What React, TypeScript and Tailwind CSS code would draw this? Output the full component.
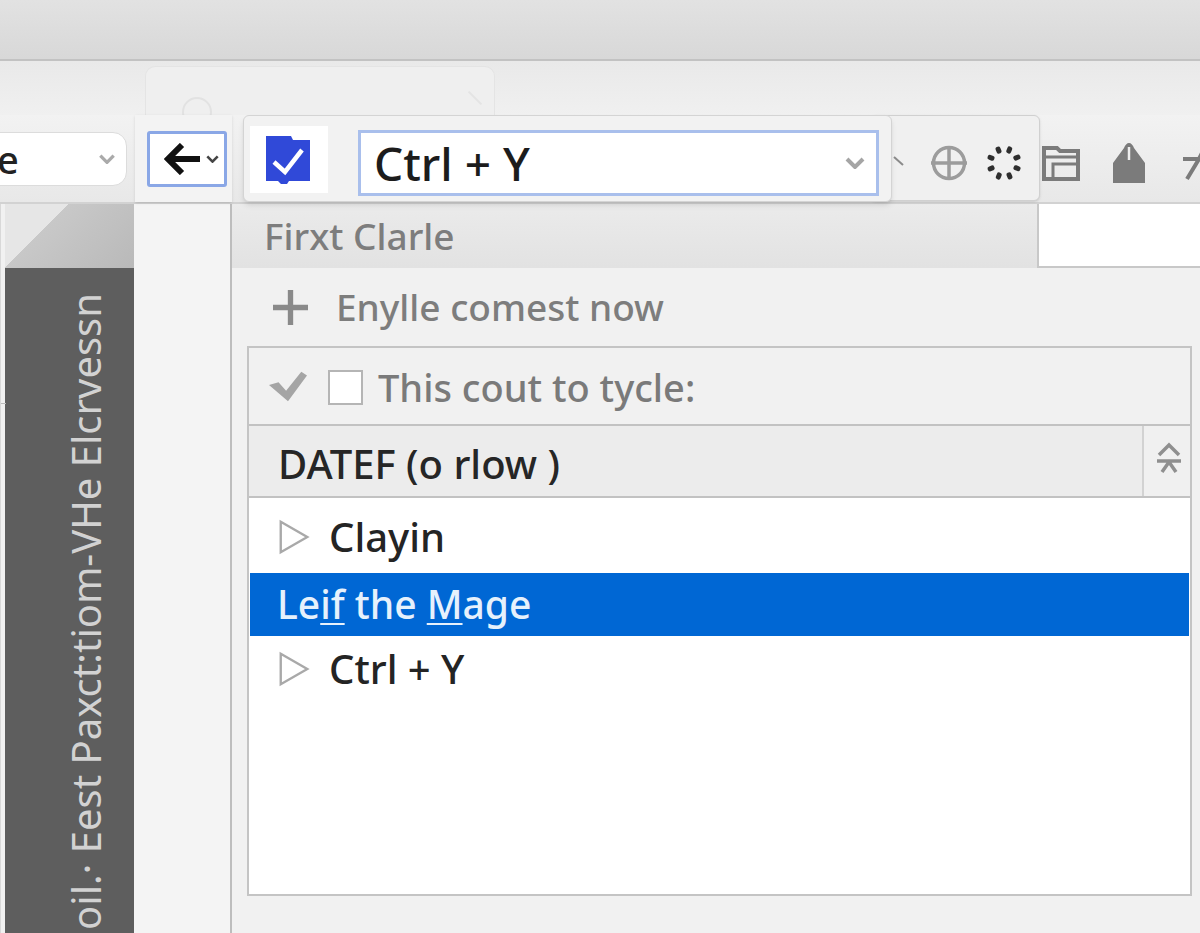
const font = "font-['Noto_Sans','Open_Sans',sans-serif]";

function Chevron({ className }: { className: string }) {
  return (
    <svg viewBox="0 0 20 12" className={className} fill="none" stroke="currentColor" strokeWidth="4">
      <path d="M2 2l8 8 8-8" />
    </svg>
  );
}

function Outline() {
  return (
    <svg viewBox="0 0 32 38" className="h-[36px] w-[32px] shrink-0 text-[#a9a9a9]" fill="none" stroke="currentColor" strokeWidth="2.5">
      <path d="M2 3l28 16L2 35z" />
    </svg>
  );
}

function BlueCheck() {
  return (
    <svg viewBox="0 0 46 50" className="h-[50px] w-[46px]">
      <path d="M1 1h25l2 4h17v41H24l-2 3h-6l-3-3H1z" fill="#3049d8" />
      <path d="M9 27l11 10L37 15" fill="none" stroke="#fff" strokeWidth="4.5" />
    </svg>
  );
}

function Globe() {
  return (
    <svg viewBox="0 0 38 36" className="h-[36px] w-[38px] text-[#9c9c9c]" fill="none" stroke="currentColor" strokeWidth="3.5">
      <circle cx="19" cy="18" r="15.5" />
      <path d="M19 2v32M1 18h36" />
    </svg>
  );
}

function Spinner() {
  const dots = [0, 45, 90, 135, 180, 225, 270, 315];
  return (
    <svg viewBox="0 0 36 36" className="h-[36px] w-[36px] text-[#2e2e2e]" fill="currentColor">
      {dots.map((a) => (
        <rect key={a} x="15.5" y="0.5" width="5" height="7" rx="2" transform={`rotate(${a + 22} 18 18)`} />
      ))}
    </svg>
  );
}

function Folder() {
  return (
    <svg viewBox="0 0 38 36" className="h-[36px] w-[38px] text-[#7b7b7b]" fill="none" stroke="currentColor" strokeWidth="4">
      <path d="M2 3h13l3 3h18v28H2z" />
      <path d="M2 12h34M11 34V19h25" strokeWidth="3" />
    </svg>
  );
}

function Tag() {
  return (
    <svg viewBox="0 0 32 40" className="h-[40px] w-[32px]">
      <path d="M16 0c2 0 4 2 5 5l11 15v20H0V20L11 5c1-3 3-5 5-5z" fill="#7b7b7b" />
      <path d="M16 4v13" stroke="#eee" strokeWidth="2.5" />
    </svg>
  );
}

function Tools() {
  return (
    <svg viewBox="0 0 40 40" className="h-[40px] w-[40px] text-[#7b7b7b]" fill="none" stroke="currentColor" strokeWidth="4">
      <path d="M0 16h34M22 4l-6 12L4 36M22 22l14 14" />
    </svg>
  );
}

function Sorter() {
  return (
    <svg viewBox="0 0 26 32" className="h-[32px] w-[26px] text-[#8f8f8f]" fill="none" stroke="currentColor" strokeWidth="3.5">
      <path d="M3 13L13 3l10 10M1 19h24M6 30l7-10 7 10" />
    </svg>
  );
}

export default function App() {
  return (
    <div className={`${font} relative flex h-[933px] w-[1200px] flex-col overflow-hidden bg-[#f1f1f1]`}>
      <div className="h-[61px] shrink-0 border-b-2 border-[#c2c2c2] bg-gradient-to-b from-[#e2e2e2] to-[#d8d8d8]" />

      <div className="h-[54px] shrink-0 bg-gradient-to-b from-[#e9e9e9] to-[#f0f0f0] pl-[145px] pt-[5px]">
        <div className="relative h-[49px] w-[350px] overflow-hidden rounded-t-[10px] border border-b-0 border-[#e4e4e4] bg-[#efefef]">
          <div className="absolute left-[36px] top-[30px] h-[30px] w-[30px] rounded-full border-2 border-[#e2e2e2]" />
          <div className="absolute left-[320px] top-[30px] h-[2px] w-[18px] rotate-45 bg-[#e4e4e4]" />
        </div>
      </div>

      <div className="relative flex h-[89px] shrink-0 border-b-2 border-[#d2d2d2] bg-gradient-to-b from-[#f2f2f2] to-[#e8e8e8]">
        <div className="ml-[-20px] mt-[17px] flex h-[54px] w-[147px] items-center justify-between rounded-r-[14px] border border-[#dcdcdc] bg-white pl-[16px] pr-[10px] text-[38px] font-medium text-[#222]">
          <span>e</span>
          <Chevron className="h-[10px] w-[18px] text-[#aaa]" />
        </div>
        <div className="ml-[8px] flex w-[97px] items-start bg-[#f3f3f3] pl-[12px] pt-[16px] shadow-sm">
          <div className="flex h-[56px] w-[80px] items-center gap-[4px] rounded-[3px] border-[3px] border-[#8aa7e6] bg-white pl-[14px]">
            <svg viewBox="0 0 38 32" className="h-[32px] w-[38px] text-[#111]" fill="none" stroke="currentColor" strokeWidth="6">
              <path d="M36 16H4M18 2L4 16l14 14" />
            </svg>
            <Chevron className="h-[8px] w-[13px] text-[#444]" />
          </div>
        </div>
        <div className="absolute right-[-23px] top-0 flex h-full items-center gap-[33px] pt-[8px]">
          <Folder />
          <Tag />
          <div className="ml-[5px]">
            <Tools />
          </div>
        </div>

        <div className="absolute left-[870px] top-0 flex h-[86px] w-[170px] items-center rounded-[6px] border border-[#d0d0d0] bg-[#f0f0f0] pl-[59px] pt-[10px] shadow-sm">
          <svg viewBox="0 0 12 10" className="absolute left-[22px] top-[40px] h-[10px] w-[12px] text-[#8a8a8a]" fill="none" stroke="currentColor" strokeWidth="2">
            <path d="M1 1l9 8" />
          </svg>
          <Globe />
          <div className="ml-[18px]">
            <Spinner />
          </div>
        </div>

        <div className="absolute left-[243px] top-0 flex h-[87px] w-[649px] items-start rounded-[6px] border border-[#d4d4d4] bg-[#f2f2f2] pl-[6px] pt-[10px] shadow-md">
          <div className="flex h-[67px] w-[78px] items-center justify-center bg-white pr-[2px]">
            <BlueCheck />
          </div>
          <div className="ml-[30px] mt-[4px] flex h-[66px] w-[521px] items-center justify-between border-[3px] border-[#a9bfec] bg-white pl-[13px] pr-[10px] text-[46px] font-medium text-[#1c1c1c]">
            <span>Ctrl + Y</span>
            <Chevron className="h-[12px] w-[22px] text-[#a5a5a5]" />
          </div>
        </div>
      </div>

      <div className="flex min-h-0 flex-1">
        <div className="relative flex w-[134px] shrink-0 flex-col border-l border-[#d8d8d8] pl-[4px]">
          <div className="absolute left-0 top-[199px] h-[1px] w-[5px] bg-[#bbb]" />
          <div className="h-[64px] shrink-0 bg-[linear-gradient(135deg,#e6e6e6_33%,#c8c8c8_33%,#b9b9b9_100%)]" />
          <div className="flex min-h-0 flex-1 overflow-hidden bg-[#5e5e5e] pl-[61px] pt-[25px]">
            <div className="h-fit rotate-180 whitespace-nowrap text-[40px] leading-none text-[#d2d2d2] [writing-mode:vertical-rl]">
              oil.· Eest Paxct:tiom-VHe Elcrvessn
            </div>
          </div>
        </div>

        <div className="w-[98px] shrink-0 border-r-2 border-[#bdbdbd] bg-[#f4f4f4]" />

        <div className="flex min-w-0 flex-1 flex-col">
          <div className="flex h-[64px] shrink-0">
            <div className="flex w-[805px] items-center bg-gradient-to-b from-[#ebebeb] to-[#e2e2e2] pl-[32px] text-[37px] font-medium text-[#7d7d7d]">
              Firxt Clarle
            </div>
            <div className="flex-1 border-b-2 border-l-2 border-[#c8c8c8] bg-white" />
          </div>

          <div className="flex h-[78px] shrink-0 items-center pl-[41px] text-[37px] font-medium text-[#7d7d7d]">
            <svg viewBox="0 0 36 36" className="h-[35px] w-[35px] text-[#8a8a8a]" fill="none" stroke="currentColor" strokeWidth="5.5">
              <path d="M18 0v36M0 18h36" />
            </svg>
            <span className="ml-[28px]">Enylle comest now</span>
          </div>

          <div className="ml-[15px] mr-[8px] flex h-[550px] shrink-0 flex-col border-2 border-[#c4c4c4]">
            <div className="flex h-[76px] shrink-0 items-center pl-[20px] pt-[2px] text-[38px] font-medium text-[#7a7a7a]">
              <svg viewBox="0 0 40 32" className="h-[32px] w-[38px] text-[#a5a5a5]" fill="currentColor">
                <path d="M0 14l10-3 8 9L34 0l6 4-20 27z" />
              </svg>
              <div className="ml-[21px] h-[35px] w-[35px] border-2 border-[#b5b5b5] bg-white" />
              <span className="ml-[15px]">This cout to tycle:</span>
            </div>

            <div className="flex h-[74px] shrink-0 items-stretch border-y-2 border-[#c2c2c2] bg-[#ececec]">
              <div className="flex flex-1 items-center pl-[29px] pt-[6px] text-[40px] font-medium text-[#262626]">DATEF (o rlow )</div>
              <div className="flex w-[48px] items-center justify-center border-l-2 border-[#d2d2d2] bg-[#f0f0f0] pb-[6px] pl-[3px]">
                <Sorter />
              </div>
            </div>

            <div className="flex flex-1 flex-col bg-white pt-[3px] text-[40px] font-medium text-[#242424]">
              <div className="flex h-[72px] items-center gap-[19px] pl-[29px]">
                <Outline />
                <span>Clayin</span>
              </div>
              <div className="mx-[1px] flex h-[63px] items-center bg-[#0067d4] pl-[27px] text-[39px] text-[#e6f1fc]">
                <span>
                  Le<span className="underline decoration-2 underline-offset-4">if</span> the <span className="underline decoration-2 underline-offset-4">M</span>age
                </span>
              </div>
              <div className="flex h-[66px] items-center gap-[19px] pl-[29px]">
                <Outline />
                <span>Ctrl + Y</span>
              </div>
            </div>
          </div>
        </div>
      </div>
    </div>
  );
}
